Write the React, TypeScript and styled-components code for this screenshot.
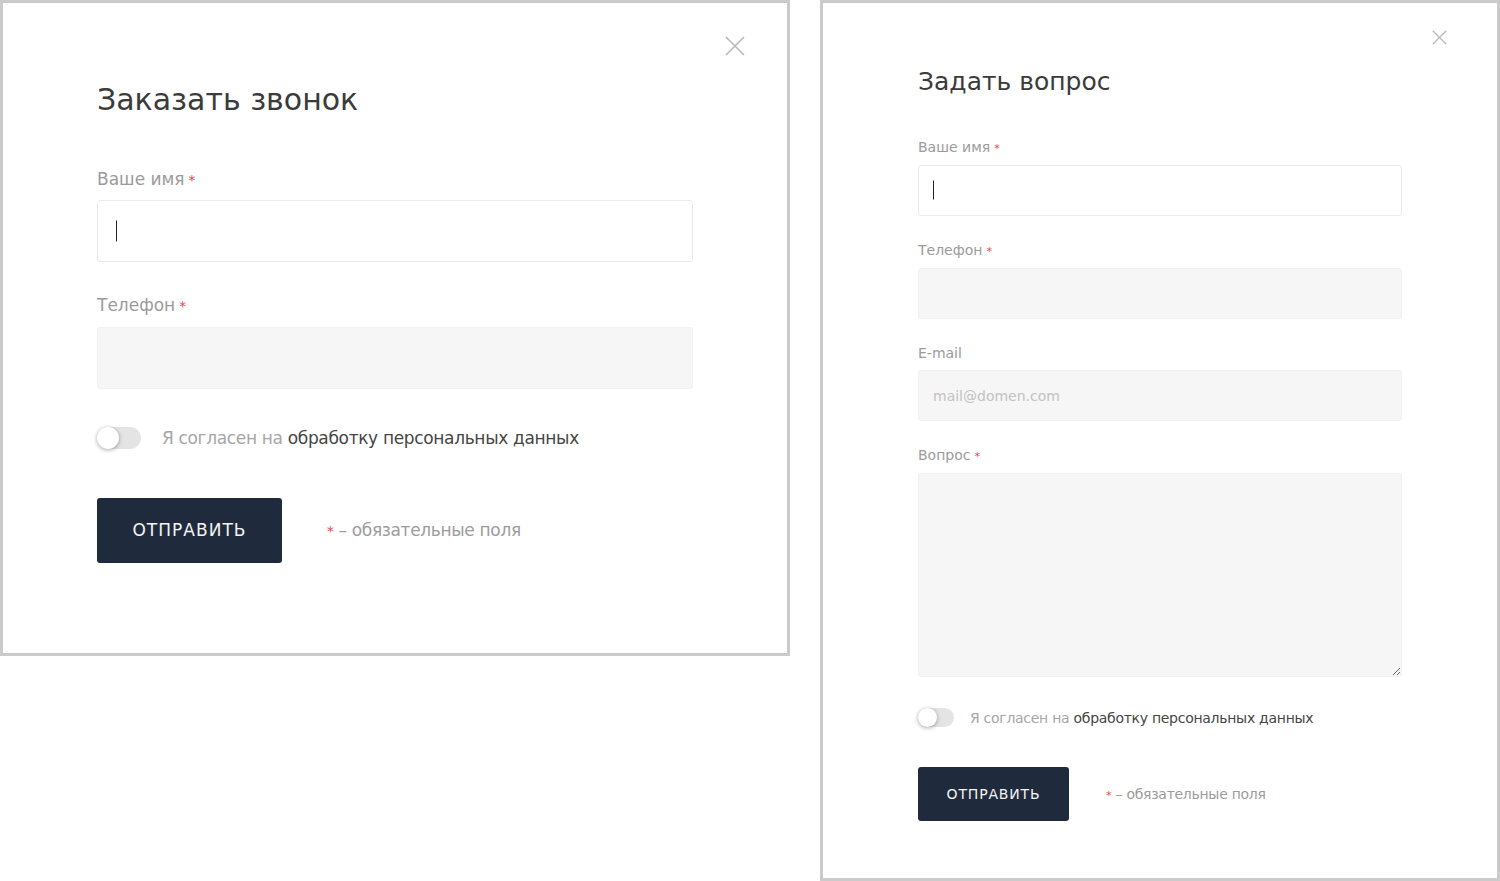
import { FC } from 'react';
import styled, { createGlobalStyle } from 'styled-components';

type Size = {
    font: number;
    title: number;
    padTop: number;
    padX: number;
    padBottom: number;
    titleGap: number;
    labelGap: number;
    fieldGap: number;
    input: number;
    textarea: number;
    inputPad: number;
    caretH: number;
    toggleGap: number;
    toggleW: number;
    toggleH: number;
    consentGap: number;
    buttonGap: number;
    btnW: number;
    btnH: number;
    noteGap: number;
    close: number;
    closeTop: number;
    closeRight: number;
};

const large: Size = {
    font: 17,
    title: 30,
    padTop: 79,
    padX: 94,
    padBottom: 90,
    titleGap: 51,
    labelGap: 11,
    fieldGap: 33,
    input: 62,
    textarea: 204,
    inputPad: 18,
    caretH: 21,
    toggleGap: 38,
    toggleW: 44,
    toggleH: 22,
    consentGap: 21,
    buttonGap: 49,
    btnW: 185,
    btnH: 65,
    noteGap: 45,
    close: 20,
    closeTop: 33,
    closeRight: 42,
};

const small: Size = {
    font: 14,
    title: 25,
    padTop: 64,
    padX: 95,
    padBottom: 57,
    titleGap: 42,
    labelGap: 9,
    fieldGap: 26,
    input: 51,
    textarea: 204,
    inputPad: 14,
    caretH: 19,
    toggleGap: 31,
    toggleW: 36,
    toggleH: 19,
    consentGap: 16,
    buttonGap: 40,
    btnW: 151,
    btnH: 54,
    noteGap: 37,
    close: 15,
    closeTop: 27,
    closeRight: 50,
};

const GlobalStyle = createGlobalStyle`
    * {
        box-sizing: border-box;
    }
    body {
        margin: 0;
        background: #ffffff;
        font-family: 'DejaVu Sans', 'Liberation Sans', sans-serif;
    }
`;

const Page = styled.div`
    display: flex;
    align-items: flex-start;
    gap: 30px;
`;

const Frame = styled.div<{ $s: Size; $width: number }>`
    position: relative;
    width: ${(p) => p.$width}px;
    border: 3px solid #cbcbcb;
    background: #ffffff;
    padding: ${(p) => p.$s.padTop}px ${(p) => p.$s.padX}px ${(p) => p.$s.padBottom}px;
`;

const Close = styled.button<{ $s: Size }>`
    position: absolute;
    top: ${(p) => p.$s.closeTop}px;
    right: ${(p) => p.$s.closeRight}px;
    width: ${(p) => p.$s.close}px;
    height: ${(p) => p.$s.close}px;
    padding: 0;
    border: none;
    background: none;
    display: grid;
    svg {
        width: 100%;
        height: 100%;
    }
`;

const Title = styled.h2<{ $s: Size }>`
    margin: 0 0 ${(p) => p.$s.titleGap}px;
    font-size: ${(p) => p.$s.title}px;
    line-height: 1.2;
    font-weight: 400;
    color: #3b3b3b;
`;

const Form = styled.form`
    display: flex;
    flex-direction: column;
`;

const Group = styled.div<{ $s: Size }>`
    display: flex;
    flex-direction: column;
    gap: ${(p) => p.$s.labelGap}px;
    &:not(:first-child) {
        margin-top: ${(p) => p.$s.fieldGap}px;
    }
`;

const Label = styled.label<{ $s: Size }>`
    font-size: ${(p) => p.$s.font}px;
    line-height: 1.2;
    color: #9b9b9b;
`;

const Star = styled.span<{ $gap?: number }>`
    color: #e8454f;
    font-size: 0.8em;
    margin-left: ${(p) => p.$gap ?? 4}px;
`;

const FieldBox = styled.div`
    position: relative;
`;

const Input = styled.input<{ $s: Size; $active?: boolean }>`
    display: block;
    width: 100%;
    height: ${(p) => p.$s.input}px;
    padding: 0 ${(p) => p.$s.inputPad}px;
    border: 1px solid ${(p) => (p.$active ? '#ebebeb' : '#f1f1f1')};
    border-radius: 3px;
    background: ${(p) => (p.$active ? '#ffffff' : '#f6f6f6')};
    font-family: inherit;
    font-size: ${(p) => p.$s.font}px;
    color: #333333;
    outline: none;
    &::placeholder {
        color: #c2c2c2;
    }
`;

const TextArea = styled.textarea<{ $s: Size }>`
    display: block;
    width: 100%;
    height: ${(p) => p.$s.textarea}px;
    padding: ${(p) => p.$s.inputPad}px;
    border: 1px solid #f1f1f1;
    border-radius: 3px;
    background: #f6f6f6;
    font-family: inherit;
    font-size: ${(p) => p.$s.font}px;
    resize: vertical;
    outline: none;
`;

const Caret = styled.span<{ $s: Size }>`
    position: absolute;
    left: ${(p) => p.$s.inputPad + 1}px;
    top: 50%;
    width: 1px;
    height: ${(p) => p.$s.caretH}px;
    transform: translateY(-50%);
    background: #222222;
`;

const Consent = styled.label<{ $s: Size }>`
    display: flex;
    align-items: center;
    gap: ${(p) => p.$s.consentGap}px;
    margin-top: ${(p) => p.$s.toggleGap}px;
    font-size: ${(p) => p.$s.font}px;
    letter-spacing: -0.02em;
    color: #a6a6a6;
    b {
        font-weight: 400;
        color: #454545;
    }
`;

const Toggle = styled.span<{ $s: Size }>`
    position: relative;
    flex: none;
    width: ${(p) => p.$s.toggleW}px;
    height: ${(p) => p.$s.toggleH}px;
    border-radius: ${(p) => p.$s.toggleH}px;
    background: #e4e4e4;
    &::after {
        content: '';
        position: absolute;
        left: 0;
        top: 0;
        width: ${(p) => p.$s.toggleH}px;
        height: ${(p) => p.$s.toggleH}px;
        border-radius: 50%;
        background: #ffffff;
        box-shadow: 0 1px 4px rgba(0, 0, 0, 0.35);
    }
`;

const Footer = styled.div<{ $s: Size }>`
    display: flex;
    align-items: center;
    gap: ${(p) => p.$s.noteGap}px;
    margin-top: ${(p) => p.$s.buttonGap}px;
`;

const Submit = styled.button<{ $s: Size }>`
    width: ${(p) => p.$s.btnW}px;
    height: ${(p) => p.$s.btnH}px;
    border: none;
    border-radius: 3px;
    background: #1f2a3c;
    color: #f4f4f4;
    font-family: inherit;
    font-size: ${(p) => p.$s.font}px;
    letter-spacing: 0.06em;
    cursor: pointer;
`;

const Note = styled.span<{ $s: Size }>`
    font-size: ${(p) => p.$s.font}px;
    letter-spacing: -0.02em;
    color: #9c9c9c;
`;

type Field = {
    label: string;
    required?: boolean;
    area?: boolean;
    active?: boolean;
    placeholder?: string;
};

type Props = {
    title: string;
    size: Size;
    width: number;
    fields: Field[];
};

const CloseIcon = () => (
    <svg viewBox="0 0 20 20" fill="none" stroke="#b8b8b8" strokeWidth="1.6">
        <path d="M1 1 L19 19 M19 1 L1 19" />
    </svg>
);

const Modal: FC<Props> = ({ title, size, width, fields }) => {
    return (
        <Frame $s={size} $width={width}>
            <Close $s={size} aria-label="Закрыть">
                <CloseIcon />
            </Close>
            <Title $s={size}>{title}</Title>
            <Form onSubmit={(e) => e.preventDefault()}>
                {fields.map((f) => (
                    <Group $s={size} key={f.label}>
                        <Label $s={size}>
                            {f.label}
                            {f.required && <Star>*</Star>}
                        </Label>
                        {f.area ? (
                            <TextArea $s={size} />
                        ) : (
                            <FieldBox>
                                <Input $s={size} $active={f.active} placeholder={f.placeholder} />
                                {f.active && <Caret $s={size} />}
                            </FieldBox>
                        )}
                    </Group>
                ))}
                <Consent $s={size}>
                    <Toggle $s={size} />
                    <span>
                        Я согласен на <b>обработку персональных данных</b>
                    </span>
                </Consent>
                <Footer $s={size}>
                    <Submit $s={size} type="submit">
                        ОТПРАВИТЬ
                    </Submit>
                    <Note $s={size}>
                        <Star $gap={0}>*</Star> – обязательные поля
                    </Note>
                </Footer>
            </Form>
        </Frame>
    );
};

const App: FC = () => {
    return (
        <Page>
            <GlobalStyle />
            <Modal
                title="Заказать звонок"
                size={large}
                width={790}
                fields={[
                    { label: 'Ваше имя', required: true, active: true },
                    { label: 'Телефон', required: true },
                ]}
            />
            <Modal
                title="Задать вопрос"
                size={small}
                width={680}
                fields={[
                    { label: 'Ваше имя', required: true, active: true },
                    { label: 'Телефон', required: true },
                    { label: 'E-mail', placeholder: 'mail@domen.com' },
                    { label: 'Вопрос', required: true, area: true },
                ]}
            />
        </Page>
    );
};

export default App;
